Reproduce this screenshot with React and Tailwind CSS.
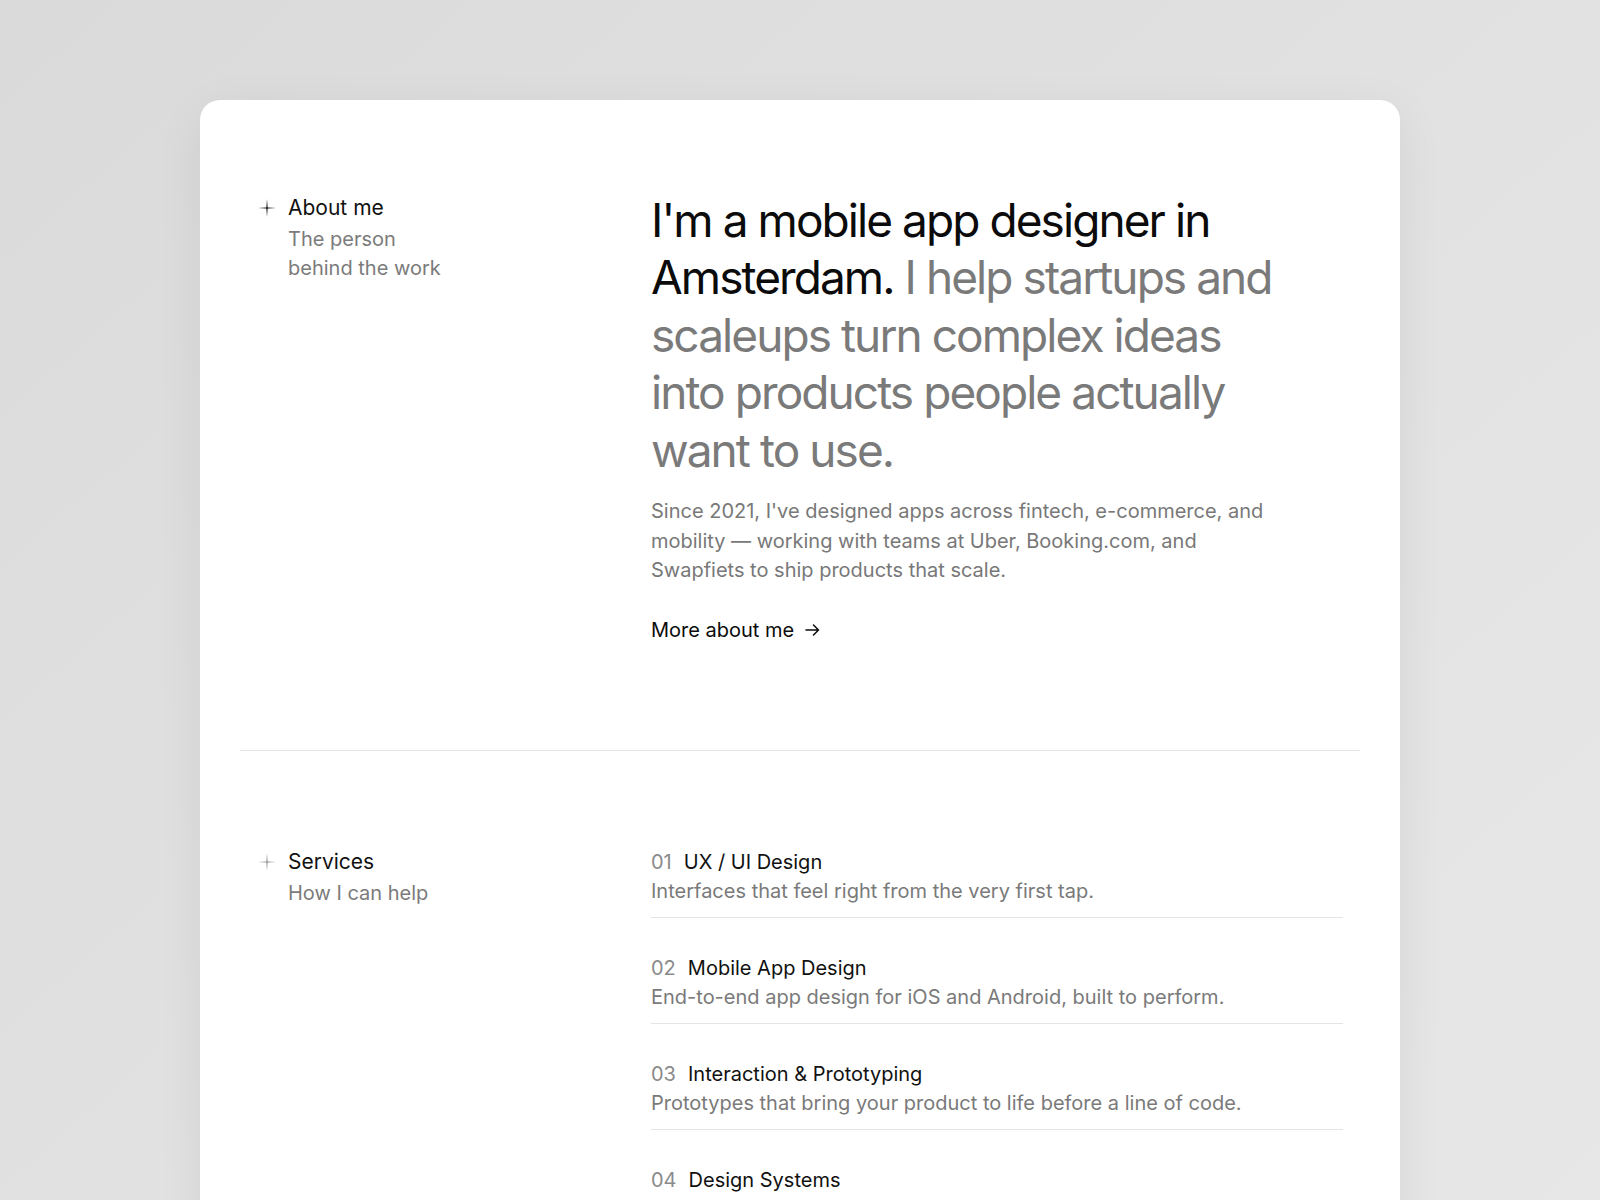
import React from 'react'

const services = [
  { n: '01', title: 'UX / UI Design', desc: 'Interfaces that feel right from the very first tap.' },
  { n: '02', title: 'Mobile App Design', desc: 'End-to-end app design for iOS and Android, built to perform.' },
  { n: '03', title: 'Interaction & Prototyping', desc: 'Prototypes that bring your product to life before a line of code.' },
  { n: '04', title: 'Design Systems', desc: 'Scalable component libraries that keep teams shipping fast.' },
]

function Spark({ className }){
  return (
    <svg viewBox="0 0 18 18" className={className} fill="currentColor">
      <path d="M9 0 L9.6 8.4 L18 9 L9.6 9.6 L9 18 L8.4 9.6 L0 9 L8.4 8.4 Z" />
    </svg>
  )
}

function Arrow(){
  return (
    <svg viewBox="0 0 15 12" className="w-[15px] h-[12px]" fill="none" stroke="currentColor" strokeWidth="1.5" strokeLinecap="round" strokeLinejoin="round">
      <path d="M1 6 H13.5 M8.5 1 L13.5 6 L8.5 11" />
    </svg>
  )
}

function SectionLabel({ title, sub, dark }){
  return (
    <div className="pl-[18px]">
      <div className="flex items-center gap-3">
        <Spark className={`w-[18px] h-[18px] ${dark ? 'text-black' : 'text-[#8a8a8a]'}`} />
        <span className="text-[21px] leading-[28px] text-[#111]">{title}</span>
      </div>
      <p className="pl-[30px] mt-[3px] text-[20px] leading-[28.6px] text-[#7b7b7b]">{sub}</p>
    </div>
  )
}

export default function App(){
  return (
    <div className="min-h-screen bg-gradient-to-br from-[#dadada] via-[#e2e2e2] to-[#e8e8e8] pt-[100px] pb-20" style={{ fontFamily: 'Inter, "Noto Sans", sans-serif' }}>
      <div className="mx-auto w-[1200px] bg-white rounded-[20px] shadow-[0_12px_48px_rgba(0,0,0,0.07)] px-10">
        {/* about */}
        <section className="grid grid-cols-[411px_1fr] pt-[94px] pb-[106px]">
          <SectionLabel title="About me" sub={<>The person<br />behind the work</>} dark />
          <div className="w-[692px]">
            <h1 className="-mt-[2px] text-[46px] leading-[57.4px] tracking-[-0.042em] text-[#0b0b0b] max-w-[636px]">
              I'm a mobile app designer in Amsterdam.{' '}
              <span className="text-[#7a7a7a]">I help startups and scaleups turn complex ideas into products people actually want to use.</span>
            </h1>
            <p className="mt-[18px] max-w-[630px] text-[20px] leading-[29.6px] text-[#787878]">
              Since 2021, I've designed apps across fintech, e-commerce, and mobility — working with teams at Uber, Booking.com, and Swapfiets to ship products that scale.
            </p>
            <a href="#" className="mt-[30px] inline-flex items-center gap-[11px] text-[20px] leading-[28px] text-[#0b0b0b]">
              More about me <Arrow />
            </a>
          </div>
        </section>

        <div className="h-px bg-[#e4e4e4]" />

        {/* services */}
        <section className="grid grid-cols-[411px_1fr] pt-[97px] pb-24">
          <SectionLabel title="Services" sub="How I can help" />
          <div className="w-[692px]">
            {services.map((s, i) => (
              <div key={s.n} className={`${i > 0 ? 'pt-[36px]' : ''} pb-[11px] border-b border-[#e4e4e4]`}>
                <div className="flex items-center gap-3 text-[20px] leading-[28px]">
                  <span className="text-[#8a8a8a]">{s.n}</span>
                  <span className="text-[#111]">{s.title}</span>
                </div>
                <p className="text-[20px] leading-[30px] text-[#7a7a7a]">{s.desc}</p>
              </div>
            ))}
          </div>
        </section>
      </div>
    </div>
  )
}
